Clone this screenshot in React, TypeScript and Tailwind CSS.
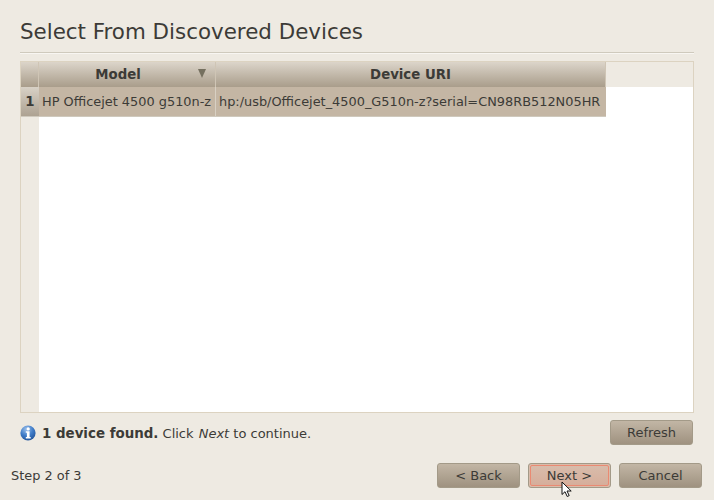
import React from 'react';

const FONT = "font-['DejaVu_Sans',sans-serif]";

const InfoIcon = () => (
  <svg width="16" height="16" viewBox="0 0 16 16" className="shrink-0">
    <defs>
      <radialGradient id="infoBall" cx="0.4" cy="0.25" r="0.85">
        <stop offset="0" stopColor="#9cc0ea" />
        <stop offset="0.5" stopColor="#3f7cc8" />
        <stop offset="1" stopColor="#1c4c90" />
      </radialGradient>
    </defs>
    <circle cx="8" cy="8" r="7.6" fill="url(#infoBall)" />
    <circle cx="8.2" cy="3.9" r="1.6" fill="#fff" />
    <path d="M5.8 6.3h3.8v5.6h1.1v1.5H5.8v-1.5h1.1V7.8H5.8z" fill="#fff" />
  </svg>
);

const Cursor = () => (
  <svg width="14" height="17" viewBox="0 0 14 17" className="absolute left-[32px] top-[17px]">
    <path d="M1 1v12.5l3-2.8 2.2 4.8 2-.9-2.2-4.6h4.2z" fill="#fff" stroke="#111" strokeWidth="1" />
  </svg>
);

const WizardButton = ({ label, focused }: { label: string; focused?: boolean }) => (
  <div
    className={`relative flex h-[25px] w-[83px] items-center justify-center rounded-[3px] border border-[#a39a88] text-[13px] text-[#3c3b37] ${
      focused ? 'bg-[#d9bcab] p-px' : 'bg-gradient-to-b from-[#c2b6a5] to-[#9f9280]'
    }`}
  >
    {focused ? (
      <span className="flex h-full w-full items-center justify-center rounded-[2px] border border-[#ea8a72] bg-gradient-to-b from-[#d8bcab] to-[#d6ae9b]">
        {label}
      </span>
    ) : (
      label
    )}
    {focused && <Cursor />}
  </div>
);

const headerCell =
  'flex h-[25px] items-center border-r border-[#cfc5b5] bg-gradient-to-b from-[#dcd5ca] to-[#a99d8b] font-bold text-[13.3px] text-[#3c3b37]';

const App = () => {
  return (
    <div className={`flex h-[500px] w-[714px] flex-col overflow-hidden bg-[#eeeae2] ${FONT} text-[#3c3b37]`}>
      {/* Page title */}
      <div className="mx-5 mt-5 h-[33px] border-b border-[#cfcabd] text-[21.4px] leading-[24px] whitespace-nowrap shadow-[0_1px_0_#f8f6f2]">
        Select From Discovered Devices
      </div>

      {/* Devices table */}
      <div className="mx-5 mt-2 h-[352px] w-[674px] border border-[#dcd3c1] bg-white">
        <div className="flex h-full">
          <div className="flex w-[18px] flex-col bg-[#eeeae2]">
            <div className={`${headerCell} w-full`} />
            <div className="flex h-[30px] items-center justify-center border-b border-[#cfc9bd] bg-gradient-to-b from-[#d8d1c6] to-[#ada292] text-[13.3px] font-bold">
              1
            </div>
            <div className="flex-1" />
          </div>
          <div className="flex flex-1 flex-col">
            <div className="flex bg-[#eeeae2]">
              <div className={`${headerCell} relative w-[177px] justify-center pr-[18px]`}>
                Model
                <svg width="8" height="9" viewBox="0 0 8 9" className="absolute left-[159px] top-[7px]">
                  <path d="M0 0h8L4 9z" fill="#75705f" />
                </svg>
              </div>
              <div className={`${headerCell} w-[390px] justify-center`}>Device URI</div>
            </div>
            <div className="flex h-[30px] w-[567px] items-center border-b border-[#cfc9bd] bg-[#c4b6a4] text-[12.9px] whitespace-nowrap">
              <div className="flex h-full w-[177px] items-center border-r border-[#d8d0c3] pl-[3px]">
                HP Officejet 4500 g510n-z
              </div>
              <div className="pl-[3px]">hp:/usb/Officejet_4500_G510n-z?serial=CN98RB512N05HR</div>
            </div>
          </div>
        </div>
      </div>

      {/* Status line */}
      <div className="mx-5 mt-[7px] flex h-[25px] w-[673px] items-center text-[13px]">
        <InfoIcon />
        <span className="ml-[6px] pt-[3px]">
          <b className="text-[13.4px]">1 device found.</b> Click <i className="ml-[1px]">Next</i> to continue.
        </span>
        <div className="ml-auto">
          <WizardButton label="Refresh" />
        </div>
      </div>

      {/* Wizard footer */}
      <div className="mt-[18px] ml-[11px] flex h-[25px] w-[691px] items-center text-[12.9px]">
        <span>Step 2 of 3</span>
        <div className="ml-auto flex gap-2">
          <WizardButton label="< Back" />
          <WizardButton label="Next >" focused />
          <WizardButton label="Cancel" />
        </div>
      </div>
    </div>
  );
};

export default App;
